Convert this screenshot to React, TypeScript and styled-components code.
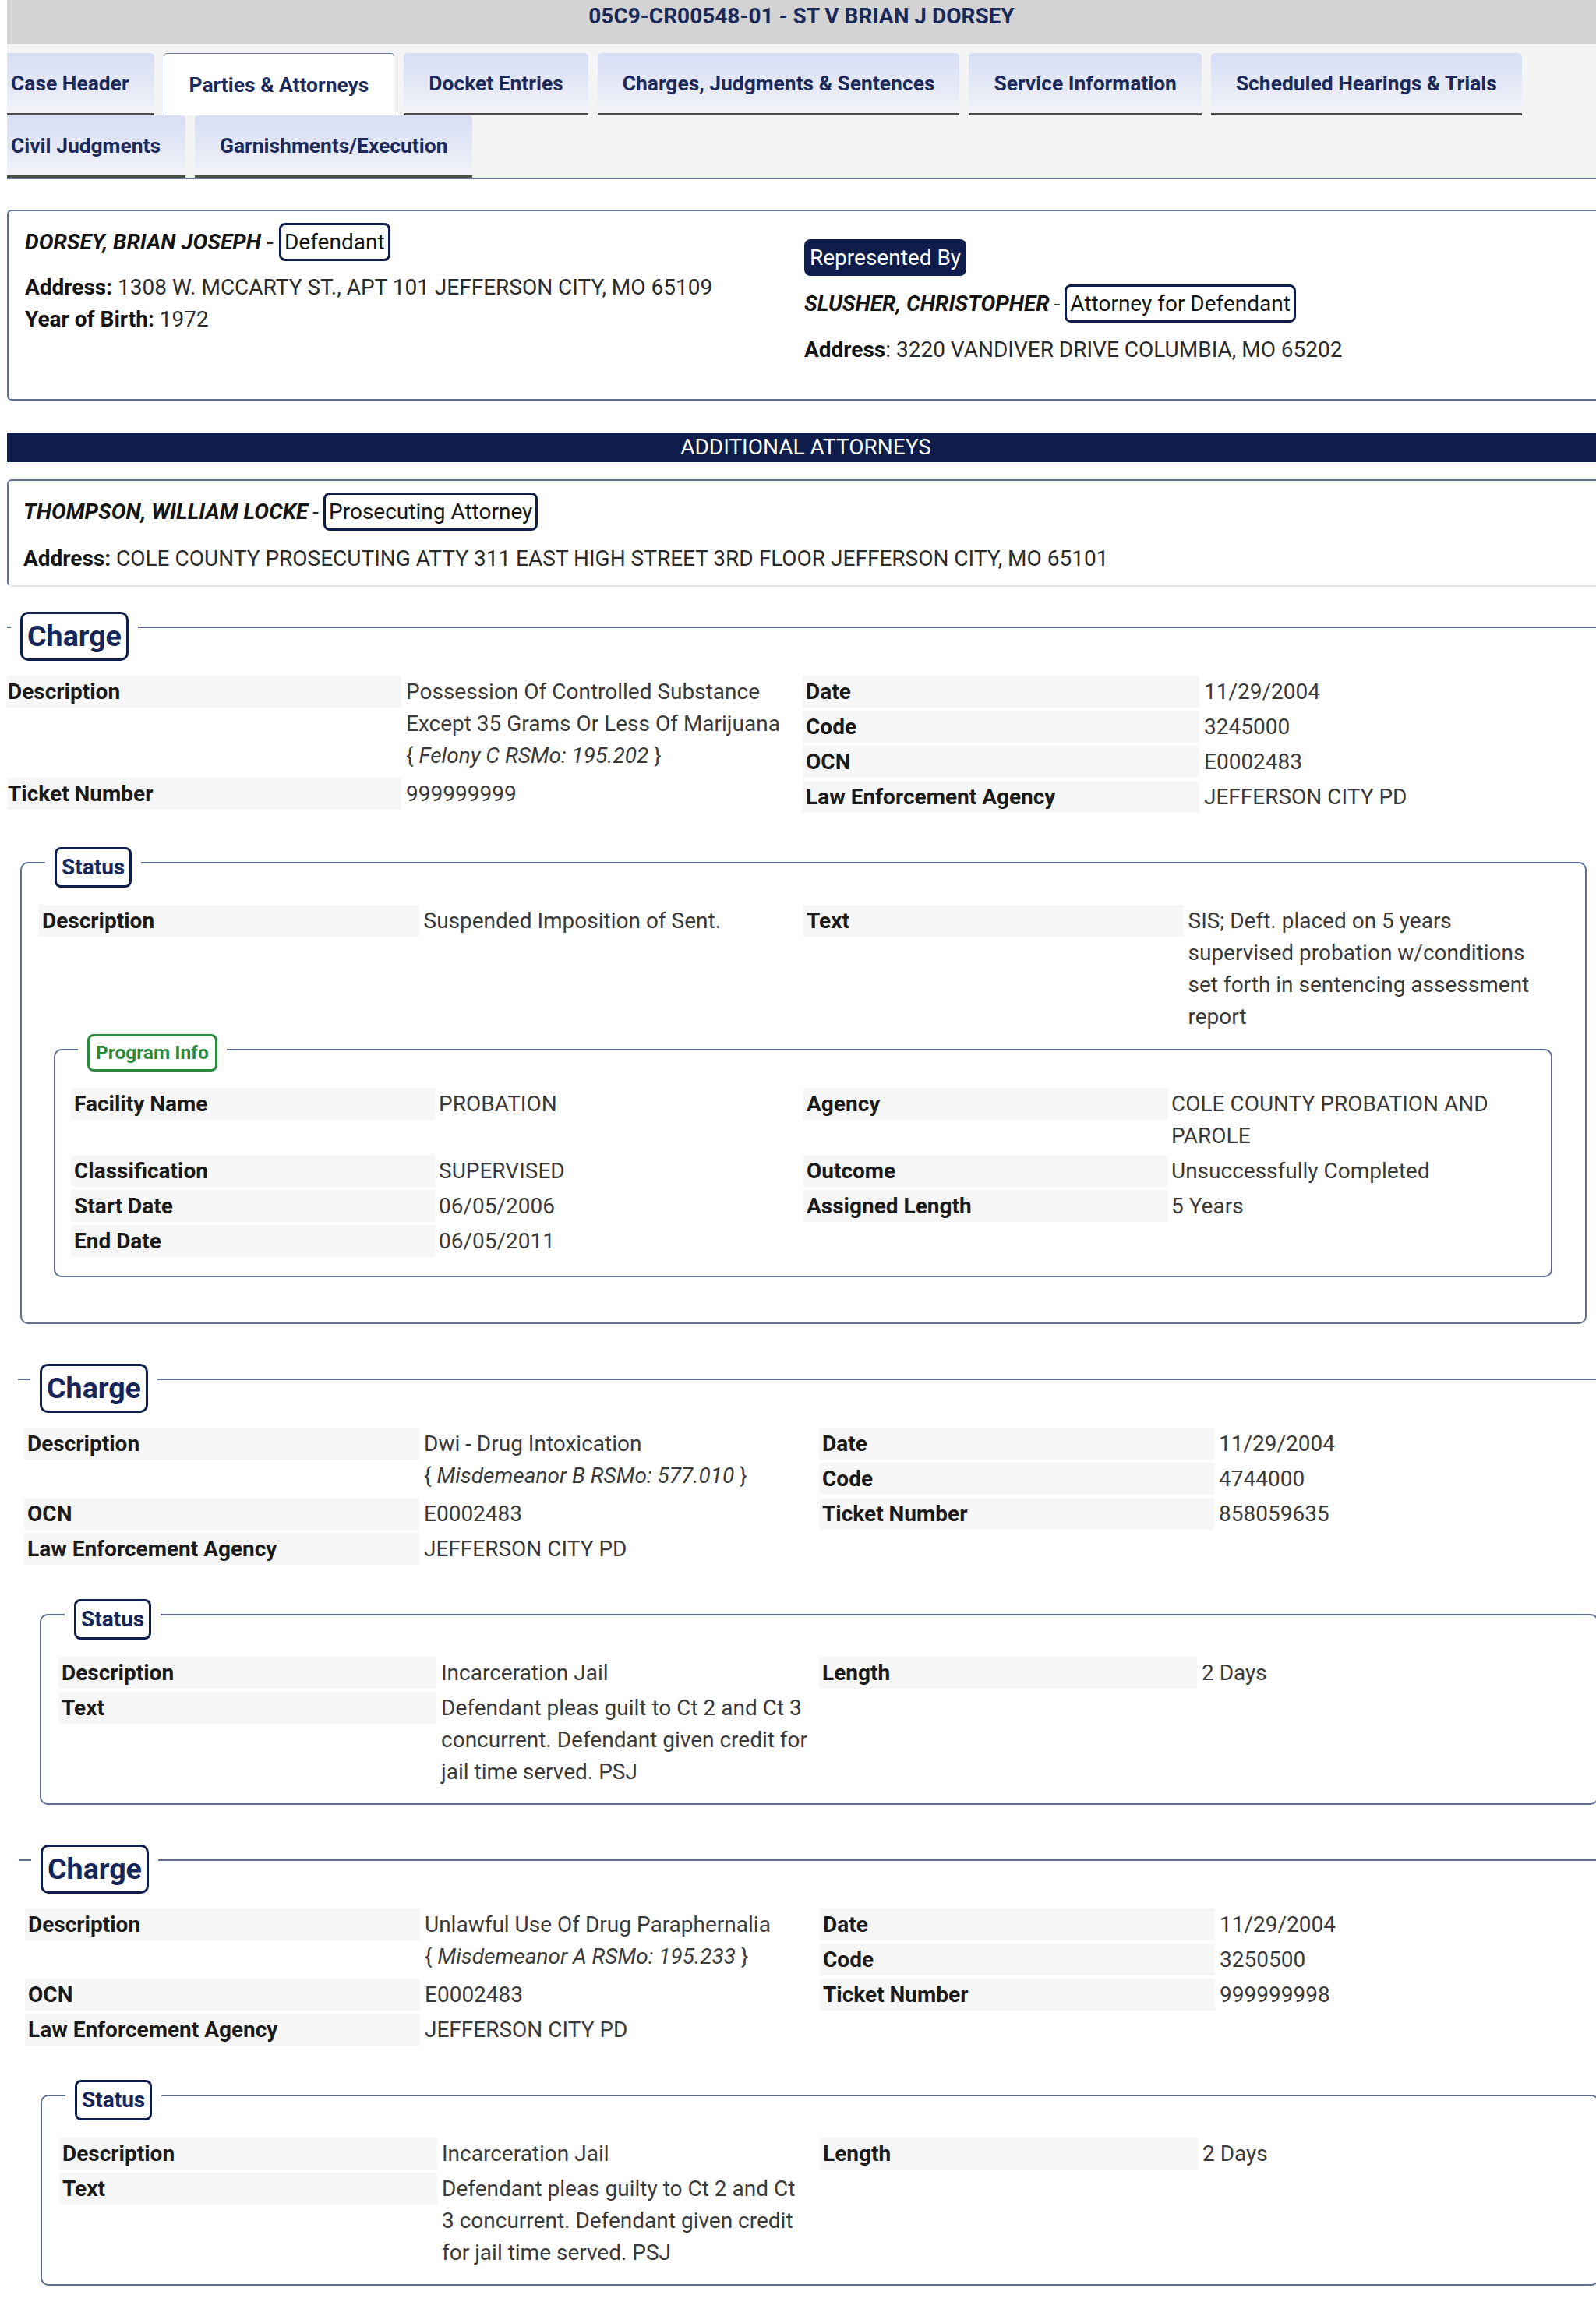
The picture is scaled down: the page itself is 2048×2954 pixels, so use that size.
import React from "react";
import styled, { createGlobalStyle } from "styled-components";

const NAVY = "#0e1d4b";
const INK = "#16265a";
const RULE = "#5f6f92";
const GREEN = "#2b8a3e";

const GlobalStyle = createGlobalStyle`
  *, *::before, *::after { box-sizing: border-box; }
  html, body { margin: 0; padding: 0; background: #ffffff; }
  body { font-family: Roboto, "Noto Sans", "Liberation Sans", Arial, sans-serif; color: #1c1c1c; }
`;

const Page = styled.main`
  width: 2039px;
  margin-left: 9px;
  overflow: hidden;
  font-size: 28px;
  line-height: 41px;
  padding-bottom: 16px;
`;

const TitleBar = styled.header`
  height: 57px;
  padding-top: 4px;
  background: #d3d3d3;
  text-align: center;
  font-size: 28px;
  font-weight: 700;
  line-height: 34px;
  color: #1a2a58;
`;

const TabStrip = styled.nav`
  padding-top: 11px;
  background: #f4f4f4;
  border-bottom: 2px solid #6e7c99;
`;

const TabRow = styled.div`
  display: flex;
  flex-wrap: wrap;
  column-gap: 12px;
  width: 2066px;
  margin-left: -27px;
`;

const Tab = styled.div<{ $active?: boolean }>`
  display: flex;
  align-items: center;
  height: 80px;
  padding: 0 32px;
  font-size: 26.4px;
  font-weight: 700;
  line-height: 32px;
  color: #1b2a5a;
  white-space: nowrap;
  border-radius: 5px 5px 0 0;
  background: ${(p) =>
    p.$active
      ? "#ffffff"
      : "linear-gradient(180deg, #d7def5 0%, #e5e9f6 55%, #f3f4f8 100%)"};
  border: ${(p) => (p.$active ? "1px solid #6f7c9c" : "none")};
  border-bottom: ${(p) => (p.$active ? "none" : "3px solid #4b4b4b")};
`;

const PartyCard = styled.section`
  display: grid;
  grid-template-columns: 1000px 1000px;
  width: 2070px;
  margin-top: 39px;
  padding: 15px 21px 43px;
  border: 2px solid ${RULE};
  border-radius: 6px;
`;

const PartyColumn = styled.div<{ $top?: number }>`
  display: flex;
  flex-direction: column;
  align-items: flex-start;
  padding-top: ${(p) => p.$top ?? 0}px;
`;

const NameLine = styled.div<{ $mt?: number }>`
  display: flex;
  align-items: center;
  margin-top: ${(p) => p.$mt ?? 0}px;
`;

const PartyName = styled.span`
  font-weight: 700;
  font-style: italic;
  color: #141414;
`;

const Dash = styled.span<{ $bold?: boolean }>`
  margin: 0 6px 0 6px;
  font-weight: ${(p) => (p.$bold ? 700 : 400)};
  color: #2a2a2a;
`;

const RoleBadge = styled.span`
  padding: 0 4px;
  border: 3px solid ${NAVY};
  border-radius: 8px;
  line-height: 43px;
  color: #141414;
`;

const RepresentedTag = styled.span`
  padding: 0 7px;
  background: ${NAVY};
  border-radius: 8px;
  line-height: 47px;
  color: #ffffff;
`;

const InfoLine = styled.div<{ $mt?: number }>`
  margin-top: ${(p) => p.$mt ?? 0}px;
  color: #2b2b2b;
  white-space: nowrap;
`;

const FieldName = styled.span`
  font-weight: 700;
  color: #141414;
`;

const SectionBar = styled.div`
  width: 2050px;
  margin-top: 41px;
  background: ${NAVY};
  color: #ffffff;
  text-align: center;
  font-size: 28px;
  line-height: 38px;
`;

const AttorneyCard = styled.section`
  width: 2070px;
  margin-top: 22px;
  padding: 15px 19px 14px;
  border: 2px solid ${RULE};
  border-bottom-color: #e9ebf0;
  border-radius: 6px;
`;

const ChargeGroup = styled.section<{ $shift: number; $mt: number }>`
  width: 2120px;
  margin: ${(p) => p.$mt}px 0 0 ${(p) => p.$shift}px;
  border-top: 2px solid ${RULE};
`;

const LegendSlot = styled.div<{ $inset: number }>`
  width: fit-content;
  margin: -21px 0 0 ${(p) => p.$inset}px;
  padding: 0 12px;
  background: #ffffff;
`;

const ChargeTag = styled.span`
  display: block;
  padding: 6px 6px;
  border: 3px solid ${NAVY};
  border-radius: 10px;
  font-size: 37.6px;
  font-weight: 700;
  line-height: 45px;
  color: ${INK};
`;

const StatusTag = styled.span`
  display: block;
  padding: 3px 6px;
  border: 3px solid ${NAVY};
  border-radius: 8px;
  font-size: 28px;
  font-weight: 700;
  line-height: 40px;
  color: ${INK};
`;

const ProgramTag = styled.span`
  display: block;
  padding: 3px 8px;
  border: 3px solid ${GREEN};
  border-radius: 8px;
  font-size: 24.5px;
  font-weight: 700;
  line-height: 36px;
  color: ${GREEN};
`;

const TwoColumns = styled.div<{ $col: number; $mt: number; $inset?: number }>`
  display: grid;
  grid-template-columns: ${(p) => p.$col}px ${(p) => p.$col}px;
  align-items: start;
  margin-top: ${(p) => p.$mt}px;
  padding-left: ${(p) => p.$inset ?? 0}px;
`;

const SharedRows = styled.div<{ $col: number }>`
  display: grid;
  grid-template-columns: ${(p) => p.$col}px ${(p) => p.$col}px;
  row-gap: 4px;
  align-items: start;
  margin-top: 21px;
`;

const FieldColumn = styled.div`
  display: flex;
  flex-direction: column;
  gap: 4px;
`;

const Pair = styled.div<{ $gap?: number }>`
  display: grid;
  grid-template-columns: 1fr 1fr;
  column-gap: ${(p) => p.$gap ?? 6}px;
  align-items: start;
`;

const Label = styled.div`
  padding-left: 4px;
  background: #f6f6f6;
  font-weight: 700;
  color: #1a1a1a;
  white-space: nowrap;
`;

const Value = styled.div`
  color: #3a3a3a;
  white-space: pre-line;
`;

const Classification = styled.span`
  display: block;
  margin-bottom: 4px;
  em {
    font-style: italic;
  }
`;

const StatusGroup = styled.section<{ $col: number; $mt: number }>`
  width: ${(p) => p.$col * 2 + 48}px;
  margin: ${(p) => p.$mt}px 0 0 28px;
  padding: 0 22px 20px;
  border: 2px solid ${RULE};
  border-radius: 10px;
`;

const ProgramGroup = styled.section`
  margin: 21px 20px 38px 19px;
  padding: 0 19px 24px 20px;
  border: 2px solid ${RULE};
  border-radius: 10px;
`;

type Field = { label: string; value: string; cls?: string };

type StatusData = {
  col: number;
  left: Field[];
  right: Field[];
  program?: { left: Field[]; right: Field[] };
};

type ChargeData = {
  shift: number;
  mt: number;
  col: number;
  left: Field[];
  right: Field[];
  status: StatusData;
};

const tabsRow = [
  "Case Header",
  "Parties & Attorneys",
  "Docket Entries",
  "Charges, Judgments & Sentences",
  "Service Information",
  "Scheduled Hearings & Trials",
  "Civil Judgments",
  "Garnishments/Execution",
];

const charges: ChargeData[] = [
  {
    shift: -11,
    mt: 51,
    col: 1024,
    left: [
      {
        label: "Description",
        value: "Possession Of Controlled Substance Except 35 Grams Or Less Of Marijuana",
        cls: "Felony C RSMo: 195.202",
      },
      { label: "Ticket Number", value: "999999999" },
    ],
    right: [
      { label: "Date", value: "11/29/2004" },
      { label: "Code", value: "3245000" },
      { label: "OCN", value: "E0002483" },
      { label: "Law Enforcement Agency", value: "JEFFERSON CITY PD" },
    ],
    status: {
      col: 981,
      left: [{ label: "Description", value: "Suspended Imposition of Sent." }],
      right: [
        {
          label: "Text",
          value:
            "SIS; Deft. placed on 5 years\nsupervised probation w/conditions\nset forth in sentencing assessment\nreport",
        },
      ],
      program: {
        left: [
          { label: "Facility Name", value: "PROBATION" },
          { label: "Classification", value: "SUPERVISED" },
          { label: "Start Date", value: "06/05/2006" },
          { label: "End Date", value: "06/05/2011" },
        ],
        right: [
          { label: "Agency", value: "COLE COUNTY PROBATION AND PAROLE" },
          { label: "Outcome", value: "Unsuccessfully Completed" },
          { label: "Assigned Length", value: "5 Years" },
        ],
      },
    },
  },
  {
    shift: 14,
    mt: 70,
    col: 1020,
    left: [
      { label: "Description", value: "Dwi - Drug Intoxication", cls: "Misdemeanor B RSMo: 577.010" },
      { label: "OCN", value: "E0002483" },
      { label: "Law Enforcement Agency", value: "JEFFERSON CITY PD" },
    ],
    right: [
      { label: "Date", value: "11/29/2004" },
      { label: "Code", value: "4744000" },
      { label: "Ticket Number", value: "858059635" },
    ],
    status: {
      col: 976,
      left: [
        { label: "Description", value: "Incarceration Jail" },
        {
          label: "Text",
          value:
            "Defendant pleas guilt to Ct 2 and Ct 3\nconcurrent. Defendant given credit for\njail time served. PSJ",
        },
      ],
      right: [{ label: "Length", value: "2 Days" }],
    },
  },
  {
    shift: 15,
    mt: 70,
    col: 1020,
    left: [
      {
        label: "Description",
        value: "Unlawful Use Of Drug Paraphernalia",
        cls: "Misdemeanor A RSMo: 195.233",
      },
      { label: "OCN", value: "E0002483" },
      { label: "Law Enforcement Agency", value: "JEFFERSON CITY PD" },
    ],
    right: [
      { label: "Date", value: "11/29/2004" },
      { label: "Code", value: "3250500" },
      { label: "Ticket Number", value: "999999998" },
    ],
    status: {
      col: 976,
      left: [
        { label: "Description", value: "Incarceration Jail" },
        {
          label: "Text",
          value:
            "Defendant pleas guilty to Ct 2 and Ct\n3 concurrent. Defendant given credit\nfor jail time served. PSJ",
        },
      ],
      right: [{ label: "Length", value: "2 Days" }],
    },
  },
];

function FieldPair({ f, gap }: { f: Field; gap?: number }) {
  return (
    <Pair $gap={gap}>
      <Label>{f.label}</Label>
      <Value>
        {f.value}
        {f.cls && (
          <Classification>
            {"{ "}
            <em>{f.cls}</em>
            {" }"}
          </Classification>
        )}
      </Value>
    </Pair>
  );
}

function Status({ s }: { s: StatusData }) {
  const progRows: (Field | null)[] = [];
  if (s.program) {
    const n = Math.max(s.program.left.length, s.program.right.length);
    for (let i = 0; i < n; i++) {
      progRows.push(s.program.left[i] ?? null, s.program.right[i] ?? null);
    }
  }
  return (
    <StatusGroup $col={s.col} $mt={63}>
      <LegendSlot $inset={8}>
        <StatusTag>Status</StatusTag>
      </LegendSlot>
      <TwoColumns $col={s.col} $mt={22}>
        <FieldColumn>
          {s.left.map((f) => (
            <FieldPair key={f.label} f={f} />
          ))}
        </FieldColumn>
        <FieldColumn>
          {s.right.map((f) => (
            <FieldPair key={f.label} f={f} />
          ))}
        </FieldColumn>
      </TwoColumns>
      {s.program && (
        <ProgramGroup>
          <LegendSlot $inset={9}>
            <ProgramTag>Program Info</ProgramTag>
          </LegendSlot>
          <SharedRows $col={940}>
            {progRows.map((f, i) =>
              f ? <FieldPair key={i} f={f} gap={4} /> : <div key={i} />
            )}
          </SharedRows>
        </ProgramGroup>
      )}
    </StatusGroup>
  );
}

function Charge({ c }: { c: ChargeData }) {
  return (
    <ChargeGroup $shift={c.shift} $mt={c.mt}>
      <LegendSlot $inset={16}>
        <ChargeTag>Charge</ChargeTag>
      </LegendSlot>
      <TwoColumns $col={c.col} $mt={19} $inset={8}>
        <FieldColumn>
          {c.left.map((f) => (
            <FieldPair key={f.label} f={f} />
          ))}
        </FieldColumn>
        <FieldColumn>
          {c.right.map((f) => (
            <FieldPair key={f.label} f={f} />
          ))}
        </FieldColumn>
      </TwoColumns>
      <Status s={c.status} />
    </ChargeGroup>
  );
}

export default function App() {
  return (
    <>
      <GlobalStyle />
      <Page>
        <TitleBar>05C9-CR00548-01 - ST V BRIAN J DORSEY</TitleBar>
        <TabStrip>
          <TabRow>
            {tabsRow.map((t) => (
              <Tab key={t} $active={t === "Parties & Attorneys"}>
                {t}
              </Tab>
            ))}
          </TabRow>
        </TabStrip>

        <PartyCard>
          <PartyColumn>
            <NameLine>
              <PartyName>DORSEY, BRIAN JOSEPH</PartyName>
              <Dash $bold>-</Dash>
              <RoleBadge>Defendant</RoleBadge>
            </NameLine>
            <InfoLine $mt={13}>
              <FieldName>Address:</FieldName> 1308 W. MCCARTY ST., APT 101 JEFFERSON CITY, MO 65109
            </InfoLine>
            <InfoLine>
              <FieldName>Year of Birth:</FieldName> 1972
            </InfoLine>
          </PartyColumn>
          <PartyColumn $top={21}>
            <RepresentedTag>Represented By</RepresentedTag>
            <NameLine $mt={11}>
              <PartyName>SLUSHER, CHRISTOPHER</PartyName>
              <Dash>-</Dash>
              <RoleBadge>Attorney for Defendant</RoleBadge>
            </NameLine>
            <InfoLine $mt={14}>
              <FieldName>Address</FieldName>: 3220 VANDIVER DRIVE COLUMBIA, MO 65202
            </InfoLine>
          </PartyColumn>
        </PartyCard>

        <SectionBar>ADDITIONAL ATTORNEYS</SectionBar>

        <AttorneyCard>
          <NameLine>
            <PartyName>THOMPSON, WILLIAM LOCKE</PartyName>
            <Dash>-</Dash>
            <RoleBadge>Prosecuting Attorney</RoleBadge>
          </NameLine>
          <InfoLine $mt={15}>
            <FieldName>Address:</FieldName> COLE COUNTY PROSECUTING ATTY 311 EAST HIGH STREET 3RD FLOOR JEFFERSON CITY, MO 65101
          </InfoLine>
        </AttorneyCard>

        {charges.map((c, i) => (
          <Charge key={i} c={c} />
        ))}
      </Page>
    </>
  );
}
